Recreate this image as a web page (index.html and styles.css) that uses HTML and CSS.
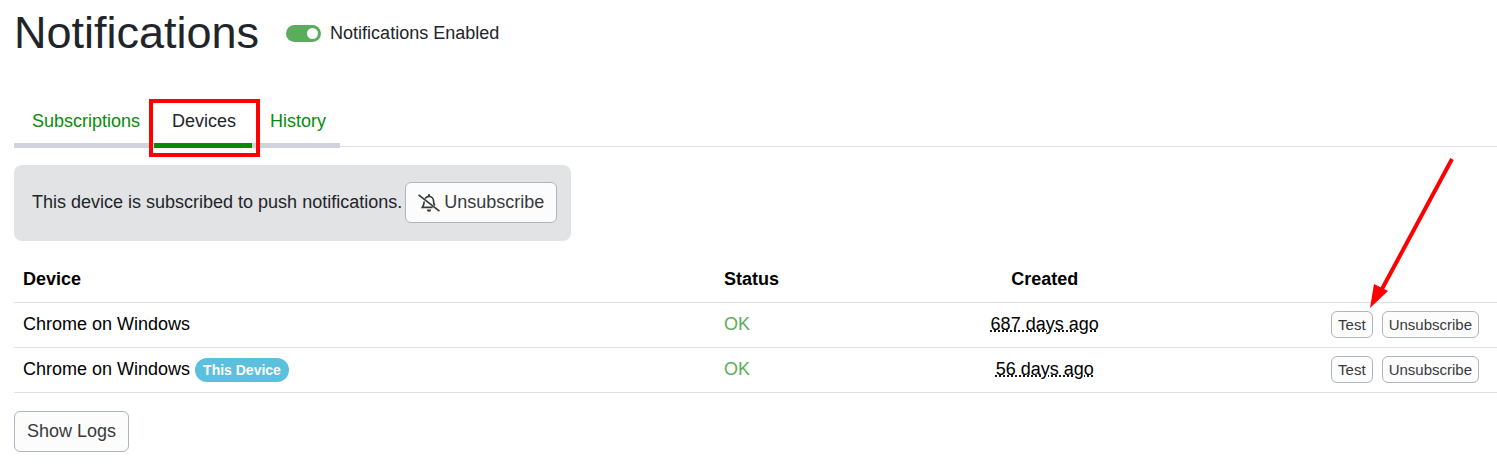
FILE: index.html
```html
<!DOCTYPE html>
<html lang="en">
<head>
  <meta charset="UTF-8">
  <meta name="viewport" content="width=device-width, initial-scale=1.0">
  <title>Notifications</title>
  <link rel="stylesheet" href="styles.css">
</head>
<body>
  <main class="page">
    <header class="page-header">
      <h1>Notifications</h1>
      <div class="switch">
        <input type="checkbox" id="enabled" checked>
        <label for="enabled">Notifications Enabled</label>
      </div>
    </header>

    <nav class="tabs">
      <a class="tab" href="#subscriptions">Subscriptions</a>
      <a class="tab active" href="#devices">Devices</a>
      <a class="tab" href="#history">History</a>
    </nav>

    <div class="panel">
      <span>This device is subscribed to push notifications.</span>
      <button type="button" class="btn">
        <svg class="icon" viewBox="0 0 640 512" width="22" height="18" fill="none" stroke="currentColor" aria-hidden="true">
          <path d="M205 130C230 88 272 64 320 64c75 0 132 58 132 132 0 62 14 102 38 134M180 210c-2 78-20 122-54 174h300" stroke-width="48"/>
          <path d="M320 0v64" stroke-width="60"/>
          <path d="M256 448h128a64 64 0 0 1-128 0z" fill="currentColor" stroke="none"/>
          <path d="M16 20l608 472" stroke-width="50"/>
        </svg>
        Unsubscribe
      </button>
    </div>

    <table class="devices">
      <thead>
        <tr>
          <th class="col-device">Device</th>
          <th class="col-status">Status</th>
          <th class="col-created">Created</th>
          <th class="col-actions"></th>
        </tr>
      </thead>
      <tbody>
        <tr>
          <td>Chrome on Windows</td>
          <td class="col-status ok">OK</td>
          <td class="col-created"><abbr title="687 days ago">687 days ago</abbr></td>
          <td>
            <div class="actions">
              <button type="button" class="btn btn-sm">Test</button>
              <button type="button" class="btn btn-sm">Unsubscribe</button>
            </div>
          </td>
        </tr>
        <tr>
          <td>Chrome on Windows <span class="badge">This Device</span></td>
          <td class="col-status ok">OK</td>
          <td class="col-created"><abbr title="56 days ago">56 days ago</abbr></td>
          <td>
            <div class="actions">
              <button type="button" class="btn btn-sm">Test</button>
              <button type="button" class="btn btn-sm">Unsubscribe</button>
            </div>
          </td>
        </tr>
      </tbody>
    </table>

    <button type="button" class="btn">Show Logs</button>

    <svg class="arrow" viewBox="0 0 84 152" width="84" height="152" aria-hidden="true">
      <path d="M82 1L12 131" stroke="#f00" stroke-width="4"/>
      <path d="M0 150L4 126L18 133z" fill="#f00"/>
    </svg>
  </main>
</body>
</html>
```

FILE: styles.css
```css
* {
  box-sizing: border-box;
}
body {
  margin: 0;
  background: #fff;
  color: #212529;
  font-family: "Liberation Sans", Arial, sans-serif;
  font-size: 18px;
  line-height: 27px;
}
.page {
  position: relative;
  padding: 6px 0 14px 14px;
}
.page-header {
  display: flex;
  align-items: center;
  gap: 27px;
  margin-bottom: 43px;
}
h1 {
  margin: 0;
  font-size: 45px;
  font-weight: normal;
  line-height: 54px;
}
.switch {
  display: flex;
  align-items: center;
  gap: 9px;
}
.switch input {
  appearance: none;
  display: flex;
  align-items: center;
  justify-content: flex-end;
  width: 35px;
  height: 17px;
  margin: 0;
  padding: 3px;
  border-radius: 9px;
  background: #5aad5a;
}
.switch input::before {
  content: "";
  width: 11px;
  height: 11px;
  border-radius: 50%;
  background: #fff;
}
.switch input:not(:checked) {
  justify-content: flex-start;
  background: #adb5bd;
}

/* tabs */
.tabs {
  display: flex;
  height: 44px;
  margin-bottom: 18px;
  border-bottom: 1px solid #dee2e6;
}
.tab {
  position: relative;
  height: 45px;
  padding: 5px 14px 0 18px;
  border-bottom: 5px solid #ced4da;
  color: #098b09;
  text-decoration: none;
}
.tab.active {
  padding-right: 16px;
  border-color: #098b09;
  color: #212529;
}
.tab.active::after {
  content: "";
  position: absolute;
  top: -4px;
  right: -8px;
  bottom: -14px;
  left: -5px;
  border: 4px solid #f00;
  z-index: 1;
}

.panel {
  display: flex;
  align-items: center;
  gap: 3px;
  width: fit-content;
  margin-bottom: 16px;
  padding: 17px 14px 18px 18px;
  border-radius: 8px;
  background: #e2e3e5;
}
.btn {
  display: inline-flex;
  align-items: center;
  gap: 4px;
  padding: 6px 12px;
  border: 1px solid #adb5bd;
  border-radius: 6px;
  background: #fcfcfc;
  color: #373a3c;
  font: inherit;
  cursor: pointer;
}
.btn-sm {
  padding: 2px 6px;
  font-size: 15px;
  line-height: 21px;
}
.icon {
  display: block;
}

/* device list */
.devices {
  width: 100%;
  margin-bottom: 18px;
  border-collapse: collapse;
  color: #000;
}
.devices th,
.devices td {
  height: 45px;
  padding: 0 9px;
  border-bottom: 1px solid #dee2e6;
  text-align: left;
}
.devices .col-created {
  width: 19%;
  text-align: center;
}
.devices .col-status {
  width: 13%;
  padding-left: 13px;
}
.col-device {
  width: 47%;
}
.devices .ok {
  color: #5aad5a;
}
.devices abbr {
  text-decoration: underline dotted;
}
.actions {
  display: flex;
  justify-content: flex-end;
  gap: 9px;
  padding-right: 9px;
}
.badge {
  display: inline-block;
  padding: 0 8px;
  border-radius: 12px;
  background: #5bc0de;
  color: #fff;
  font-size: 14px;
  font-weight: bold;
  line-height: 24px;
}

.arrow {
  position: absolute;
  top: 158px;
  right: 43px;
}
```
